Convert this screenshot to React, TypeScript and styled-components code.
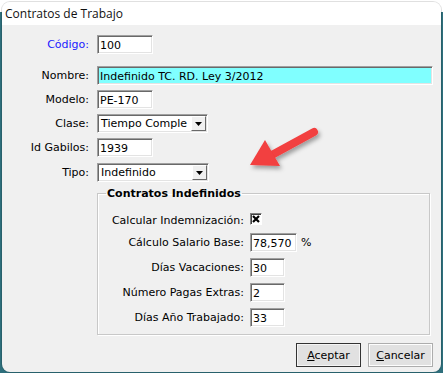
import styled, { createGlobalStyle } from "styled-components";

const GlobalStyle = createGlobalStyle`
    html, body {
        margin: 0;
        padding: 0;
        background: #ffffff;
    }
    #root {
        width: 443px;
        height: 373px;
        overflow: hidden;
    }
`;

const Desktop = styled.div`
    width: 443px;
    height: 373px;
    background: linear-gradient(#ffffff 0 12px, #2e6f7c 12px);
    padding: 2px 2px 1px 2px;
    box-sizing: border-box;
    display: flex;
    position: relative;
`;

const Window = styled.div`
    flex: 1;
    display: flex;
    flex-direction: column;
    background: #f0f0f0;
    border-radius: 8px;
    overflow: hidden;
    box-shadow: 0 0 0 1px rgba(0, 0, 0, 0.12);
    font-family: "DejaVu Sans", Tahoma, sans-serif;
    font-size: 11px;
    color: #000;
`;

const TitleBar = styled.div`
    height: 23px;
    background: #ffffff;
    display: flex;
    align-items: center;
    padding-left: 3px;
    font-family: "Open Sans", "Noto Sans", sans-serif;
    font-size: 12px;
    color: #111;
`;

const Body = styled.div`
    flex: 1;
    display: flex;
    flex-direction: column;
    padding-top: 10px;
`;

const Form = styled.div`
    display: grid;
    grid-template-columns: 87px 1fr;
    column-gap: 8px;
    align-items: center;
`;

const Label = styled.div<{ $top?: number; $blue?: boolean }>`
    text-align: right;
    margin-top: ${(p) => p.$top ?? 0}px;
    color: ${(p) => (p.$blue ? "#1a1aff" : "#000")};
    white-space: nowrap;
`;

const Slot = styled.div<{ $top?: number }>`
    margin-top: ${(p) => p.$top ?? 0}px;
    display: flex;
    align-items: center;
    gap: 4px;
`;

const Field = styled.input<{ $w: number; $bg?: string }>`
    width: ${(p) => p.$w}px;
    height: 19px;
    box-sizing: border-box;
    margin: 0;
    padding: 2px 0 0 2px;
    font: inherit;
    color: #000;
    background: ${(p) => p.$bg ?? "#ffffff"};
    border-style: solid;
    border-width: 1px;
    border-color: #a0a0a0 #ffffff #ffffff #a0a0a0;
    box-shadow: inset 1px 1px 0 #696969, inset -1px -1px 0 #e3e3e3;
    outline: none;
`;

const Combo = styled.div<{ $w: number }>`
    width: ${(p) => p.$w}px;
    height: 19px;
    box-sizing: border-box;
    background: #ffffff;
    border-style: solid;
    border-width: 1px;
    border-color: #a0a0a0 #ffffff #ffffff #a0a0a0;
    box-shadow: inset 1px 1px 0 #696969, inset -1px -1px 0 #e3e3e3;
    display: flex;
    align-items: stretch;
    padding: 1px;
`;

const ComboText = styled.div`
    flex: 1;
    overflow: hidden;
    white-space: nowrap;
    padding: 1px 0 0 2px;
`;

const DropButton = styled.div`
    width: 15px;
    background: #f0f0f0;
    border: 1px solid;
    border-color: #ffffff #696969 #696969 #ffffff;
    box-sizing: border-box;
    display: flex;
    align-items: center;
    justify-content: center;
`;

const Group = styled.fieldset`
    grid-column: 2;
    margin: 5px 11px 0 0;
    padding: 13px 0 7px 0;
    border: 1px solid #c8c8c8;
    box-shadow: 1px 1px 0 #ffffff, inset 1px 1px 0 #ffffff;
`;

const Legend = styled.legend`
    font-weight: bold;
    padding: 0 1px;
    margin-left: 8px;
    font-size: 11px;
`;

const GroupGrid = styled.div`
    display: grid;
    grid-template-columns: 146px 1fr;
    column-gap: 6px;
    row-gap: 6px;
    align-items: center;
`;

const Check = styled.div`
    width: 12px;
    height: 12px;
    margin-bottom: 2px;
    box-sizing: border-box;
    background: #ffffff;
    border-style: solid;
    border-width: 1px;
    border-color: #808080 #ffffff #ffffff #808080;
    box-shadow: inset 1px 1px 0 #404040;
    display: flex;
    align-items: center;
    justify-content: center;
`;

const Buttons = styled.div`
    margin-top: auto;
    margin-bottom: 5px;
    display: flex;
    justify-content: flex-end;
    gap: 7px;
    padding-right: 8px;
`;

const Button = styled.button<{ $default?: boolean }>`
    width: 65px;
    height: 24px;
    margin: 0;
    font: inherit;
    color: #000;
    background: #e1e1e1;
    border: 1px solid ${(p) => (p.$default ? "#333333" : "#adadad")};
    box-shadow: ${(p) => (p.$default ? "inset 0 0 0 1px #f5f5f5" : "inset 0 0 0 1px #fdfdfd")};
    padding: 0;
`;

const Arrow = styled.svg`
    position: absolute;
    left: 240px;
    top: 120px;
    overflow: visible;
`;

const Triangle = () => (
    <svg width="7" height="4" viewBox="0 0 7 4">
        <path d="M0 0h7L3.5 4z" fill="#000" />
    </svg>
);

export default function App() {
    return (
        <>
            <GlobalStyle />
            <Desktop>
                <Window>
                    <TitleBar>Contratos de Trabajo</TitleBar>
                    <Body>
                        <Form>
                            <Label $blue>Código:</Label>
                            <Slot><Field $w={56} readOnly value="100" /></Slot>

                            <Label $top={12}>Nombre:</Label>
                            <Slot $top={12}>
                                <Field $w={336} $bg="#80ffff" readOnly value="Indefinido TC. RD. Ley 3/2012" />
                            </Slot>

                            <Label $top={5}>Modelo:</Label>
                            <Slot $top={5}><Field $w={56} readOnly value="PE-170" /></Slot>

                            <Label $top={5}>Clase:</Label>
                            <Slot $top={5}>
                                <Combo $w={111}>
                                    <ComboText>Tiempo Comple</ComboText>
                                    <DropButton><Triangle /></DropButton>
                                </Combo>
                            </Slot>

                            <Label $top={5}>Id Gabilos:</Label>
                            <Slot $top={5}><Field $w={56} readOnly value="1939" /></Slot>

                            <Label $top={6}>Tipo:</Label>
                            <Slot $top={6}>
                                <Combo $w={112}>
                                    <ComboText>Indefinido</ComboText>
                                    <DropButton><Triangle /></DropButton>
                                </Combo>
                            </Slot>

                            <Group>
                                <Legend>Contratos Indefinidos</Legend>
                                <GroupGrid>
                                    <Label>Calcular Indemnización:</Label>
                                    <Slot>
                                        <Check>
                                            <svg width="8" height="8" viewBox="0 0 8 8">
                                                <path d="M1 1l6 6M7 1L1 7" stroke="#000" strokeWidth="2.2" />
                                            </svg>
                                        </Check>
                                    </Slot>

                                    <Label>Cálculo Salario Base:</Label>
                                    <Slot><Field $w={47} readOnly value="78,570" />%</Slot>

                                    <Label>Días Vacaciones:</Label>
                                    <Slot><Field $w={35} readOnly value="30" /></Slot>

                                    <Label>Número Pagas Extras:</Label>
                                    <Slot><Field $w={35} readOnly value="2" /></Slot>

                                    <Label>Días Año Trabajado:</Label>
                                    <Slot><Field $w={35} readOnly value="33" /></Slot>
                                </GroupGrid>
                            </Group>
                        </Form>
                        <Buttons>
                            <Button $default><u>A</u>ceptar</Button>
                            <Button><u>C</u>ancelar</Button>
                        </Buttons>
                    </Body>
                </Window>
                <Arrow width="90" height="60" viewBox="0 0 90 60">
                    <defs>
                        <filter id="sh" x="-20%" y="-20%" width="150%" height="150%">
                            <feDropShadow dx="2" dy="3" stdDeviation="2" floodColor="#000" floodOpacity="0.35" />
                        </filter>
                    </defs>
                    <g filter="url(#sh)" fill="#f23f3f">
                        <path d="M74 12 L30 36" stroke="#f23f3f" strokeWidth="8" strokeLinecap="round" />
                        <path d="M10 45 L25 20 L40 46 Z" />
                    </g>
                </Arrow>
            </Desktop>
        </>
    );
}
